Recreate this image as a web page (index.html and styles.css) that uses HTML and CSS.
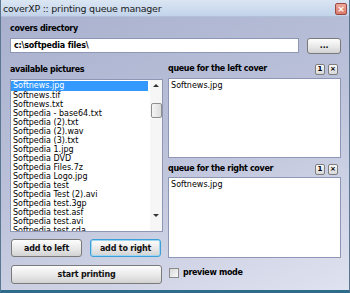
FILE: index.html
```html
<!DOCTYPE html>
<html lang="en">
<head>
    <meta charset="UTF-8">
    <title>coverXP :: printing queue manager</title>
    <link rel="stylesheet" href="styles.css">
</head>
<body>
    <div class="window">
        <div class="titlebar">
            <span class="title">coverXP :: printing queue manager</span>
            <span class="close-btn">&times;</span>
        </div>

        <div class="content">
            <div class="label">covers directory</div>
            <div class="dir-row">
                <div class="dir-input">c:\softpedia files\</div>
                <button class="btn browse-btn">...</button>
            </div>

            <div class="columns">
                <div class="left-col">
                    <div class="label">available pictures</div>
                    <div class="listbox">
                        <div class="list-items">
                            <div class="item selected">Softnews.jpg</div>
                            <div class="item">Softnews.tif</div>
                            <div class="item">Softnews.txt</div>
                            <div class="item">Softpedia - base64.txt</div>
                            <div class="item">Softpedia (2).txt</div>
                            <div class="item">Softpedia (2).wav</div>
                            <div class="item">Softpedia (3).txt</div>
                            <div class="item">Softpedia 1.jpg</div>
                            <div class="item">Softpedia DVD</div>
                            <div class="item">Softpedia Files.7z</div>
                            <div class="item">Softpedia Logo.jpg</div>
                            <div class="item">Softpedia test</div>
                            <div class="item">Softpedia Test (2).avi</div>
                            <div class="item">Softpedia test.3gp</div>
                            <div class="item">Softpedia test.asf</div>
                            <div class="item">Softpedia test.avi</div>
                            <div class="item">Softpedia test.cda</div>
                        </div>
                        <div class="scrollbar">
                            <span class="arrow up"></span>
                            <span class="thumb"></span>
                            <span class="arrow down"></span>
                        </div>
                    </div>
                    <div class="btn-row">
                        <button class="btn">add to left</button>
                        <button class="btn focused">add to right</button>
                    </div>
                    <button class="btn wide-btn">start printing</button>
                </div>

                <div class="right-col">
                    <div class="queue-head">
                        <span class="label">queue for the left cover</span>
                        <span class="mini-btns"><span class="mini">1</span><span class="mini">&times;</span></span>
                    </div>
                    <div class="queue-box">
                        <div class="item">Softnews.jpg</div>
                    </div>
                    <div class="queue-head second">
                        <span class="label">queue for the right cover</span>
                        <span class="mini-btns"><span class="mini">1</span><span class="mini">&times;</span></span>
                    </div>
                    <div class="queue-box">
                        <div class="item">Softnews.jpg</div>
                    </div>
                    <div class="check-row">
                        <span class="checkbox"></span>
                        <span class="label">preview mode</span>
                    </div>
                </div>
            </div>
        </div>
    </div>
</body>
</html>
```

FILE: styles.css
```css
body {
    margin: 0;
    font-family: "DejaVu Sans", Verdana, sans-serif;
    font-size: 8px;
    color: #000;
}
.window {
    width: 350px;
    height: 293px;
    box-sizing: border-box;
    border-left: 1px solid #5a7690;
    border-right: 1px solid #5a7690;
    border-bottom: 3px solid #2e6c8c;
    background: linear-gradient(160deg, #a7afcd 0%, #bcc2da 50%, #dfe2ef 100%);
    overflow: hidden;
}
.titlebar {
    height: 17px;
    box-sizing: border-box;
    display: flex;
    align-items: center;
    justify-content: space-between;
    padding: 0 2px 0 2px;
    background: linear-gradient(#dbe6f3, #c2d3ea);
    border-bottom: 1px solid #b3c0da;
}
.title {
    font-size: 9.5px;
    letter-spacing: -0.25px;
    color: #1a1a1a;
}
.close-btn {
    width: 10px;
    height: 10px;
    border: 1px solid #9c4a44;
    border-radius: 2px;
    background: linear-gradient(#eea898, #d9796a);
    color: #fff;
    font-size: 9px;
    font-weight: bold;
    line-height: 10px;
    text-align: center;
    margin-top: 1px;
}
.content {
    padding: 7px 8px 0 9px;
}
.label {
    font-weight: bold;
    font-size: 8px;
    line-height: 10px;
    letter-spacing: -0.35px;
}
.dir-row {
    display: flex;
    align-items: flex-start;
    margin-top: 4px;
}
.dir-input {
    width: 291px;
    height: 15px;
    box-sizing: border-box;
    background: #fff;
    border: 1px solid #8d96b4;
    font-weight: bold;
    letter-spacing: -0.2px;
    padding: 1px 3px;
    line-height: 11px;
}
.btn {
    font-family: "DejaVu Sans", Verdana, sans-serif;
    font-size: 8px;
    font-weight: bold;
    letter-spacing: -0.2px;
    color: #111;
    background: linear-gradient(#fdfdfd, #e6e6e6 60%, #d2d2d2);
    border: 1px solid #7a7a7a;
    border-radius: 3px;
    padding: 0;
    margin: 0;
}
.browse-btn {
    width: 34px;
    height: 16px;
    margin-left: 8px;
    line-height: 8px;
}
.columns {
    display: flex;
    gap: 5px;
    margin-top: 11px;
}
.left-col {
    width: 154px;
    display: flex;
    flex-direction: column;
}
.right-col {
    width: 174px;
    display: flex;
    flex-direction: column;
}
.listbox {
    margin-top: 4px;
    height: 153px;
    box-sizing: border-box;
    background: #fff;
    border: 1px solid #8d96b4;
    display: flex;
    overflow: hidden;
}
.list-items {
    flex: 1;
    padding-top: 1px;
}
.item {
    height: 9px;
    line-height: 9px;
    padding-left: 2px;
    white-space: nowrap;
}
.item.selected {
    background: #3399ff;
    color: #fff;
    margin-right: 2px;
    height: 10px;
}
.scrollbar {
    width: 12px;
    background: #f6f6f6;
    position: relative;
}
.arrow {
    position: absolute;
    left: 3px;
    width: 0;
    height: 0;
    border-left: 3px solid transparent;
    border-right: 3px solid transparent;
}
.arrow.up {
    top: 4px;
    border-bottom: 3px solid #333;
}
.arrow.down {
    bottom: 14px;
    border-top: 3px solid #333;
}
.thumb {
    position: absolute;
    left: 1px;
    top: 23px;
    width: 9px;
    height: 13px;
    border: 1px solid #8e8e8e;
    border-radius: 2px;
    background: linear-gradient(90deg, #f4f4f4, #dcdcdc);
}
.btn-row {
    display: flex;
    justify-content: space-between;
    margin-top: 7px;
    padding-left: 1px;
    padding-right: 2px;
}
.btn-row .btn {
    width: 71px;
    height: 18px;
}
.btn.focused {
    border: 1px solid #3c9fd8;
    box-shadow: inset 0 0 0 1px #9fd6f2;
}
.wide-btn {
    margin-top: 8px;
    margin-left: 1px;
    width: 151px;
    height: 19px;
}
.queue-head {
    display: flex;
    justify-content: space-between;
    align-items: center;
    height: 10px;
    margin-top: -1px;
}
.queue-head.second {
    margin-top: 6px;
}
.mini-btns {
    display: flex;
    gap: 3px;
    padding-right: 3px;
}
.mini {
    width: 8px;
    height: 9px;
    border: 1px solid #7d7d7d;
    border-radius: 2px;
    background: linear-gradient(#fafafa, #d8d8d8);
    font-weight: bold;
    font-size: 7px;
    line-height: 9px;
    text-align: center;
}
.queue-box {
    margin-top: 4px;
    height: 80px;
    box-sizing: border-box;
    background: #fff;
    border: 1px solid #8d96b4;
    padding-top: 2px;
}
.queue-head.second + .queue-box {
    margin-top: 3px;
    height: 81px;
}
.check-row {
    display: flex;
    align-items: center;
    gap: 4px;
    margin-top: 10px;
    padding-left: 1px;
}
.checkbox {
    width: 8px;
    height: 8px;
    border: 1px solid #8a8a8a;
    background: linear-gradient(135deg, #d8d8d8, #fafafa);
}
```
